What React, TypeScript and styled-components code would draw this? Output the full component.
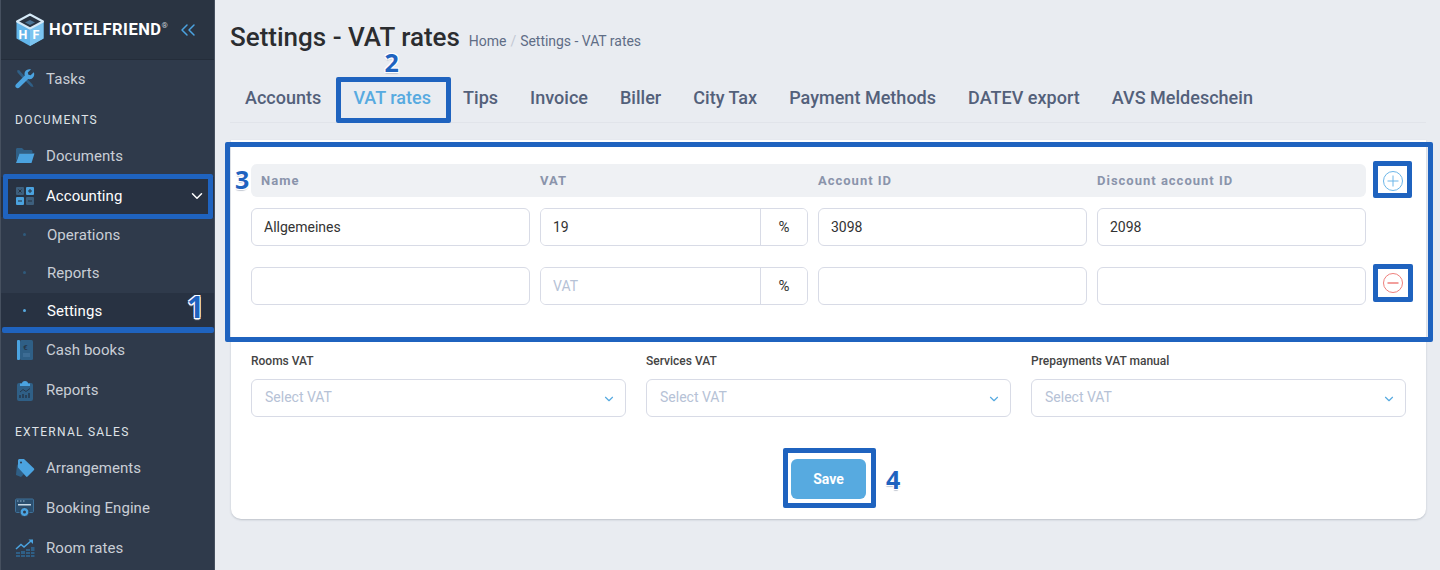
import type { ReactNode } from 'react';
import styled, { createGlobalStyle } from 'styled-components';
import { ChevronDown, ChevronsLeft } from 'lucide-react';

const GlobalStyle = createGlobalStyle`
  * {
    box-sizing: border-box;
  }

  html, body {
    margin: 0;
    height: 100%;
    overflow: hidden;
    background: #e9ecf1;
    font-family: Roboto, "Liberation Sans", sans-serif;
  }
`;

const Page = styled.div`
  display: flex;
  width: 1440px;
  height: 570px;
  overflow: hidden;
`;

const Sidebar = styled.aside`
  flex: none;
  width: 215px;
  height: 570px;
  background: #2f3a4b;
  border-left: 1px solid #46505f;
  border-right: 1px solid #46505f;
  color: #c9ced6;
`;

const Brand = styled.div`
  display: flex;
  align-items: center;
  height: 60px;
  padding-left: 14px;
  background: #2a3442;
  border-bottom: 1px solid #242d3a;
`;

const BrandName = styled.span`
  margin-left: 4px;
  font-size: 16.5px;
  font-weight: 700;
  letter-spacing: 0.5px;
  color: #fff;

  sup {
    font-size: 8px;
    font-weight: 400;
    color: #c9ced6;
    vertical-align: 7px;
    line-height: 0;
  }
`;

const Collapse = styled.span`
  display: flex;
  margin-left: 8px;
  color: #4ba3e0;
`;

const NavItem = styled.div<{ $active?: boolean }>`
  position: relative;
  display: flex;
  align-items: center;
  height: 40px;
  padding: 0 0 2px 13px;
  font-size: 15px;
  letter-spacing: 0.05px;
  color: ${(p) => (p.$active ? '#fff' : '#c9ced6')};
  background: ${(p) => (p.$active ? '#283242' : 'transparent')};
`;

const NavIcon = styled.span`
  display: flex;
  justify-content: center;
  flex: none;
  width: 22px;
  margin-right: 10px;
`;

const NavArrow = styled.span`
  display: flex;
  margin-left: auto;
  margin-right: 8px;
  color: #fff;
`;

const NavLabel = styled.div<{ $height: number }>`
  display: flex;
  align-items: center;
  height: ${(p) => p.$height}px;
  padding: 3px 0 0 14px;
  font-size: 12px;
  letter-spacing: 1.25px;
  color: #dfe2e7;
`;

const SubItem = styled.div<{ $active?: boolean }>`
  position: relative;
  display: flex;
  align-items: center;
  height: 38px;
  padding: 0 0 3px 22px;
  font-size: 15px;
  letter-spacing: 0.05px;
  color: ${(p) => (p.$active ? '#fff' : '#c9ced6')};
  background: ${(p) => (p.$active ? '#283242' : 'transparent')};
`;

const Dot = styled.i<{ $active?: boolean }>`
  flex: none;
  width: 3px;
  height: 3px;
  margin-right: 21px;
  border-radius: 50%;
  background: ${(p) => (p.$active ? '#57aae0' : '#2f5a7c')};
`;

const Main = styled.main`
  flex: 1;
  min-width: 0;
  padding: 0 14px 0 15px;
`;

const TitleRow = styled.header`
  display: flex;
  align-items: baseline;
  height: 77px;
  padding-top: 23px;
`;

const Title = styled.h1`
  margin: 0;
  font-size: 26px;
  line-height: 28px;
  font-weight: 500;
  color: #2b2d30;
`;

const Crumbs = styled.div`
  margin-left: 9px;
  font-size: 14px;
  line-height: 18px;
  letter-spacing: -0.03px;
  color: #5f6d86;

  span {
    margin: 0 4px;
    color: #c2c8d3;
  }
`;

const Tabs = styled.nav`
  display: flex;
  height: 46px;
  padding-right: 2px;
  border-bottom: 1px solid #e1e4ea;
`;

const Tab = styled.div<{ $active?: boolean }>`
  position: relative;
  display: flex;
  align-items: center;
  height: 40px;
  padding: 0 16px;
  font-size: 18px;
  font-weight: 500;
  letter-spacing: 0.02px;
  color: ${(p) => (p.$active ? '#57aae0' : '#53607a')};

  &:first-child {
    padding-left: 15px;
  }
`;

const Card = styled.section`
  position: relative;
  margin: 17px 0 0 1px;
  height: 379px;
  padding: 24px 20px 0;
  background: #fff;
  border-radius: 0 0 10px 10px;
  box-shadow: 0 1px 2px rgba(60, 70, 90, 0.25);
`;

const VatGrid = styled.div`
  display: grid;
  grid-template-columns: 279px 268px 269px 269px 34px;
  column-gap: 10px;
  align-items: center;
`;

const HeadRow = styled.div`
  grid-column: 1 / 5;
  display: grid;
  grid-template-columns: 279px 268px 269px 269px;
  column-gap: 10px;
  align-items: center;
  height: 33px;
  padding-bottom: 1px;
  background: #eff1f4;
  border-radius: 6px;
`;

const HeadCell = styled.div`
  font-size: 13px;
  font-weight: 700;
  letter-spacing: 1px;
  color: #8a94ab;

  &:first-child {
    padding-left: 10px;
  }
`;

const RowGap = styled.div<{ $height: number }>`
  grid-column: 1 / -1;
  height: ${(p) => p.$height}px;
`;

const Field = styled.input`
  width: 100%;
  height: 38px;
  padding: 0 12px;
  border: 1px solid #d8dbe6;
  border-radius: 6px;
  outline: none;
  background: #fff;
  font: 400 14px Roboto, "Liberation Sans", sans-serif;
  color: #333;

  &::placeholder {
    color: #b6c2d6;
  }
`;

const VatGroup = styled.div`
  display: flex;
  height: 38px;
  border: 1px solid #d8dbe6;
  border-radius: 6px;
  overflow: hidden;
`;

const VatInput = styled.input`
  flex: 1;
  min-width: 0;
  padding: 0 12px;
  border: 0;
  outline: none;
  font: 400 14px Roboto, "Liberation Sans", sans-serif;
  color: #333;

  &::placeholder {
    color: #b6c2d6;
  }
`;

const VatSuffix = styled.span`
  display: flex;
  align-items: center;
  justify-content: center;
  flex: none;
  width: 47px;
  border-left: 1px solid #d8dbe6;
  background: #fff;
  font-size: 15px;
  color: #333;
`;

const RoundAction = styled.div<{ $shift?: number }>`
  position: relative;
  display: flex;
  justify-content: center;
  top: ${(p) => p.$shift ?? 0}px;
`;

const Selects = styled.div`
  display: grid;
  grid-template-columns: 375px 365px 375px;
  column-gap: 20px;
  margin-top: 47px;
`;

const SelectLabel = styled.div`
  height: 18px;
  margin-bottom: 9px;
  font-size: 12px;
  line-height: 18px;
  font-weight: 500;
  color: #444;
`;

const SelectBox = styled.div`
  display: flex;
  align-items: center;
  justify-content: space-between;
  height: 38px;
  padding: 0 9px 2px 13px;
  border: 1px solid #d8dbe6;
  border-radius: 6px;
  font-size: 14px;
  color: #b6c2d6;

  svg {
    position: relative;
    top: 2px;
    color: #57aae0;
  }
`;

const Actions = styled.div`
  display: flex;
  justify-content: center;
  margin-top: 42px;
`;

const SaveButton = styled.button`
  position: relative;
  width: 75px;
  height: 40px;
  border: 0;
  border-radius: 6px;
  background: #57aae0;
  font: 700 14px Roboto, "Liberation Sans", sans-serif;
  color: #fff;
`;

const Frame = styled.div<{ $inset: string; $height?: number }>`
  position: absolute;
  inset: ${(p) => p.$inset};
  ${(p) => (p.$height ? `height: ${p.$height}px;` : '')}
  border: 5px solid #1f63bf;
  border-radius: 2px;
  pointer-events: none;
`;

const Underline = styled.div`
  position: absolute;
  left: 1px;
  right: 0;
  bottom: -2px;
  height: 6px;
  border-radius: 2px;
  background: #1f63bf;
`;

const StepNumber = styled.b<{ $left: number; $top: number; $size?: number }>`
  position: absolute;
  left: ${(p) => p.$left}px;
  top: ${(p) => p.$top}px;
  font-family: "Open Sans", sans-serif;
  font-size: ${(p) => p.$size ?? 25}px;
  line-height: 20px;
  font-weight: 700;
  color: #1f63bf;
  text-shadow: -1px -1px 0 #fff, 1px -1px 0 #fff, -1px 1px 0 #fff, 1px 1px 0 #fff, 0 2px 1px #c5cad3;
`;

const LogoIcon = () => (
  <svg width="30" height="34" viewBox="0 0 30 34">
    <path d="M15 1 28.500 8.500V25.500L15 33 1.500 25.500V8.500Z" fill="#62b5ea" />
    <path d="M15 17V33L28.500 25.500V8.500Z" fill="#7cc4f0" />
    <path d="M15 1.500 28 8.500 15 15.500 2 8.500Z" fill="#2a3442" stroke="#d5e9f7" strokeWidth="2" strokeLinejoin="round" />
    <path d="M15 7 20 9.500 15 12 10 9.500Z" fill="#4b7597" />
    <text x="3.500" y="25.500" fontFamily="Roboto" fontSize="12.500" fontWeight="700" fill="#fff">H</text>
    <text x="17.500" y="25.500" fontFamily="Roboto" fontSize="12.500" fontWeight="700" fill="#fff">F</text>
  </svg>
);

const TasksIcon = () => (
  <svg width="20" height="20" viewBox="0 0 20 20">
    <path d="M2 1.500 4 1 9 6.500 17.500 15.500 18.500 18 16 17.500 7 8.500 2.500 3.500Z" fill="#2f5f86" />
    <path d="M18.800 3.200 15.600 6.300 13.400 5.700 12.800 3.500 16 .4C13.600-.3 11 .6 9.900 3 9.400 4.200 9.400 5.400 9.800 6.500L1.100 15.200C.1 16.200.1 17.700 1.100 18.600 2 19.500 3.500 19.500 4.400 18.600L13.100 9.900C14.300 10.300 15.600 10.300 16.800 9.700 19 8.500 19.800 5.500 18.800 3.200Z" fill="#4ba3e0" />
  </svg>
);

const FolderIcon = () => (
  <svg width="20" height="18" viewBox="0 0 20 18">
    <path d="M1 2.500C1 1.700 1.600 1 2.500 1H7l2 2h7c.8 0 1.500.7 1.500 1.500V6H5L1 14Z" fill="#2f5f86" />
    <path d="M4.500 6.500H19.500L16.500 16H1Z" fill="#4ba3e0" />
  </svg>
);

const CalcIcon = () => (
  <svg width="20" height="20" viewBox="0 0 20 20">
    <rect x="1" y="1" width="8" height="8" rx="1" fill="#3d5f7d" />
    <rect x="11" y="1" width="8" height="8" rx="1" fill="#4ba3e0" />
    <rect x="1" y="11" width="8" height="8" rx="1" fill="#4ba3e0" />
    <rect x="11" y="11" width="8" height="8" rx="1" fill="#3d5f7d" />
    <path d="M3.500 3.500 6.500 6.500M6.500 3.500 3.500 6.500M13 5H17M15 3V7M3 15H7M13 15H17" stroke="#26303e" strokeWidth="1" />
  </svg>
);

const BookIcon = () => (
  <svg width="18" height="20" viewBox="0 0 18 20">
    <rect x="1" y="0" width="3" height="20" rx="1" fill="#4ba3e0" />
    <rect x="4" y="0" width="13" height="20" rx="1.500" fill="#2f5f86" />
    <text x="7" y="10" fontFamily="Roboto" fontSize="8" fontWeight="700" fill="#26384c">€</text>
    <rect x="7" y="13" width="7" height="4" fill="#3d6c94" />
  </svg>
);

const ClipboardIcon = () => (
  <svg width="18" height="21" viewBox="0 0 18 21">
    <rect x="1" y="3" width="16" height="18" rx="2" fill="#2f5f86" />
    <path d="M6 3.500C6 2 7 1 9 1s3 1 3 2.500H14V6H4V3.500Z" fill="#4ba3e0" />
    <path d="M4 12 7 9.500 10 11.500 14 8.500" fill="none" stroke="#26384c" strokeWidth="1" />
    <path d="M4 18V15M7 18V14M10 18V15M13 18V13" stroke="#26384c" strokeWidth="1.500" />
  </svg>
);

const TagIcon = () => (
  <svg width="20" height="20" viewBox="0 0 20 20">
    <path d="M2 6 1 17 6 19 9 16Z" fill="#2f5f86" />
    <path d="M3 2.500C3 1.700 3.700 1 4.500 1H9l10 9.500c.4.4.4 1 0 1.400L12.500 18.600c-.4.4-1 .4-1.400 0L3 9.500Z" fill="#4ba3e0" />
    <circle cx="6" cy="4.500" r="1" fill="#2f3a4b" />
  </svg>
);

const EngineIcon = () => (
  <svg width="20" height="20" viewBox="0 0 20 20">
    <path d="M1.500 1H17.500C18 1 18.500 1.500 18.500 2V13.500C18.500 14 18 14.500 17.500 14.500H1.500C1 14.500 .5 14 .5 13.500V2C.5 1.500 1 1 1.500 1Z" fill="#2b4e6e" stroke="#3f7199" />
    <path d="M2 3H3.500M5 3H6.500M8 3H9.500" stroke="#8fb4cf" strokeWidth="1" />
    <rect x="3" y="6" width="13" height="1.500" fill="#c9d9e6" />
    <circle cx="9.500" cy="14" r="4.500" fill="#4ba3e0" stroke="#2f3a4b" />
    <circle cx="9.500" cy="14" r="1.500" fill="#2f3a4b" />
  </svg>
);

const RatesIcon = () => (
  <svg width="20" height="20" viewBox="0 0 20 20">
    <path d="M1 11 6 6.500 9 9 16.500 2.500" fill="none" stroke="#4ba3e0" strokeWidth="1.500" />
    <path d="M13.500 1.500H18V6Z" fill="#4ba3e0" />
    <path d="M1 14H5V16H1ZM1 17H5V19H1ZM6 13H10V16H6ZM6 17H10V19H6ZM11 11H15V13H11ZM11 14H15V16H11ZM11 17H15V19H11ZM16 9H19.500V13H16ZM16 14H19.500V16H16ZM16 17H19.500V19H16Z" fill="#2f5f86" />
  </svg>
);

const PlusIcon = () => (
  <svg width="20" height="20" viewBox="0 0 20 20" fill="none" stroke="#6cb6e8" strokeWidth="1">
    <circle cx="10" cy="10" r="9.500" />
    <path d="M10 4.500V15.500M4.500 10H15.500" />
  </svg>
);

const MinusIcon = () => (
  <svg width="20" height="20" viewBox="0 0 20 20" fill="none" stroke="#ee7f7b" strokeWidth="1">
    <circle cx="10" cy="10" r="9.500" />
    <path d="M4.500 10H15.500" strokeWidth="1.500" />
  </svg>
);

const Nav = ({ icon, children, active, arrow, frame }: {
  icon: ReactNode;
  children: ReactNode;
  active?: boolean;
  arrow?: boolean;
  frame?: boolean;
}) => (
  <NavItem $active={active}>
    <NavIcon>{icon}</NavIcon>
    {children}
    {arrow && <NavArrow><ChevronDown size={18} /></NavArrow>}
    {frame && <Frame $inset="-3px 1px -2px 2px" />}
  </NavItem>
);

export default function App() {
  return (
    <Page>
      <GlobalStyle />
      <Sidebar>
        <Brand>
          <LogoIcon />
          <BrandName>HOTELFRIEND<sup>®</sup></BrandName>
          <Collapse><ChevronsLeft size={24} strokeWidth={1.5} /></Collapse>
        </Brand>
        <Nav icon={<TasksIcon />}>Tasks</Nav>
        <NavLabel $height={37}>DOCUMENTS</NavLabel>
        <Nav icon={<FolderIcon />}>Documents</Nav>
        <Nav icon={<CalcIcon />} active arrow frame>Accounting</Nav>
        <SubItem><Dot />Operations</SubItem>
        <SubItem><Dot />Reports</SubItem>
        <SubItem $active>
          <Dot $active />
          Settings
          <Underline />
          <StepNumber $left={186} $top={4} $size={30}>1</StepNumber>
        </SubItem>
        <Nav icon={<BookIcon />}>Cash books</Nav>
        <Nav icon={<ClipboardIcon />}>Reports</Nav>
        <NavLabel $height={38}>EXTERNAL SALES</NavLabel>
        <Nav icon={<TagIcon />}>Arrangements</Nav>
        <Nav icon={<EngineIcon />}>Booking Engine</Nav>
        <Nav icon={<RatesIcon />}>Room rates</Nav>
      </Sidebar>
      <Main>
        <TitleRow>
          <Title>Settings - VAT rates</Title>
          <Crumbs>Home<span>/</span>Settings - VAT rates</Crumbs>
        </TitleRow>
        <Tabs>
          <Tab>Accounts</Tab>
          <Tab $active>
            VAT rates
            <Frame $inset="0 -4px -6px -1px" />
            <StepNumber $left={47} $top={-25}>2</StepNumber>
          </Tab>
          <Tab>Tips</Tab>
          <Tab>Invoice</Tab>
          <Tab>Biller</Tab>
          <Tab>City Tax</Tab>
          <Tab>Payment Methods</Tab>
          <Tab>DATEV export</Tab>
          <Tab>AVS Meldeschein</Tab>
        </Tabs>
        <Card>
          <Frame $inset="2px -7px auto -6px" $height={200} />
          <StepNumber $left={4} $top={29}>3</StepNumber>
          <VatGrid>
            <HeadRow>
              <HeadCell>Name</HeadCell>
              <HeadCell>VAT</HeadCell>
              <HeadCell>Account ID</HeadCell>
              <HeadCell>Discount account ID</HeadCell>
            </HeadRow>
            <RoundAction>
              <PlusIcon />
              <Frame $inset="-10px -2px -7px -3px" />
            </RoundAction>
            <RowGap $height={11} />
            <Field defaultValue="Allgemeines" />
            <VatGroup>
              <VatInput defaultValue="19" />
              <VatSuffix>%</VatSuffix>
            </VatGroup>
            <Field defaultValue="3098" />
            <Field defaultValue="2098" />
            <div />
            <RowGap $height={21} />
            <Field />
            <VatGroup>
              <VatInput placeholder="VAT" />
              <VatSuffix>%</VatSuffix>
            </VatGroup>
            <Field />
            <Field />
            <RoundAction $shift={-3}>
              <MinusIcon />
              <Frame $inset="-9px -3px -9px -3px" />
            </RoundAction>
          </VatGrid>
          <Selects>
            <div>
              <SelectLabel>Rooms VAT</SelectLabel>
              <SelectBox>Select VAT<ChevronDown size={14} /></SelectBox>
            </div>
            <div>
              <SelectLabel>Services VAT</SelectLabel>
              <SelectBox>Select VAT<ChevronDown size={14} /></SelectBox>
            </div>
            <div>
              <SelectLabel>Prepayments VAT manual</SelectLabel>
              <SelectBox>Select VAT<ChevronDown size={14} /></SelectBox>
            </div>
          </Selects>
          <Actions>
            <SaveButton>
              Save
              <Frame $inset="-11px -10px -9px -8px" />
              <StepNumber $left={95} $top={10}>4</StepNumber>
            </SaveButton>
          </Actions>
        </Card>
      </Main>
    </Page>
  );
}
